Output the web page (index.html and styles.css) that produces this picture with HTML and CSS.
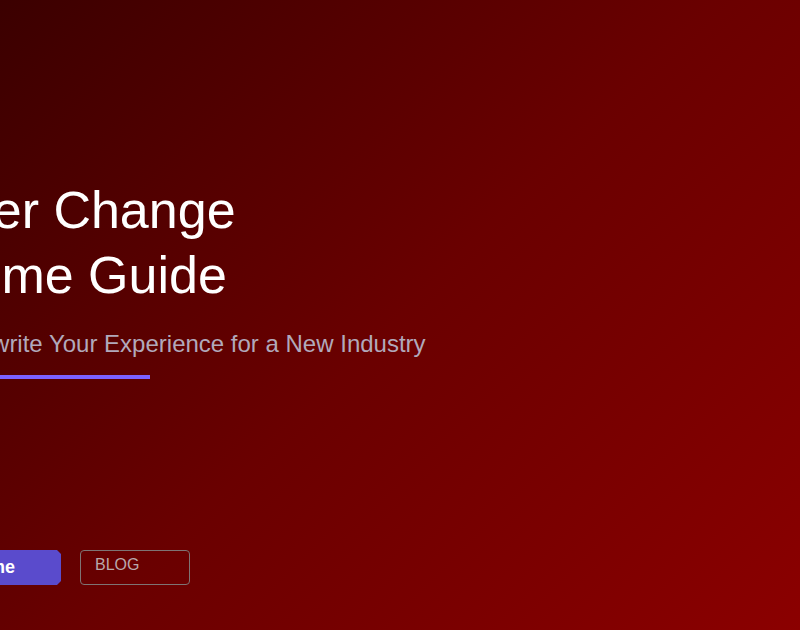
FILE: index.html
```html
<!DOCTYPE html>
<html lang="en">
<head>
<meta charset="utf-8">
<title>Career Change Resume Guide</title>
<link rel="stylesheet" href="styles.css">
</head>
<body>
  <section class="hero">
    <div class="hero-content">
      <h1 class="hero-title">Career Change<br>Resume Guide</h1>
      <p class="hero-subtitle">How to Rewrite Your Experience for a New Industry</p>
      <div class="hero-bar"></div>
      <div class="hero-actions">
        <a class="btn btn-primary" href="#">Build Resume</a>
        <a class="btn btn-outline" href="#">BLOG</a>
      </div>
    </div>
  </section>
</body>
</html>
```

FILE: styles.css
```css
html, body {
  margin: 0;
  padding: 0;
}

body {
  font-family: "Liberation Sans", Arial, Helvetica, sans-serif;
  overflow: hidden;
}

.hero {
  width: 100%;
  height: 630px;
  background: linear-gradient(135deg, #3b0000 0%, #6a0000 50%, #8b0000 100%);
  overflow: hidden;
}

.hero-content {
  margin-left: -120px;
  padding-top: 178px;
  display: flex;
  flex-direction: column;
  align-items: flex-start;
}

.hero-title {
  margin: 0;
  font-size: 52px;
  line-height: 65px;
  font-weight: 400;
  color: #ffffff;
  white-space: nowrap;
}

.hero-subtitle {
  margin: 19px 0 0;
  font-size: 24px;
  line-height: 33.6px;
  color: #b1a9bb;
  white-space: nowrap;
}

.hero-bar {
  margin-top: 14.4px;
  width: 270px;
  height: 4px;
  background: #7b61ff;
}

.hero-actions {
  margin-top: 171px;
  display: flex;
  gap: 19px;
}

.btn {
  box-sizing: border-box;
  height: 35px;
  text-decoration: none;
  font-size: 16px;
}

.btn-primary {
  width: 181px;
  padding: 0 46px 0 0;
  display: flex;
  align-items: center;
  justify-content: flex-end;
  background: #5a4bcc;
  color: #ffffff;
  font-size: 18px;
  font-weight: 700;
  clip-path: polygon(0 0, calc(100% - 4px) 0, 100% 4px, 100% calc(100% - 4px), calc(100% - 4px) 100%, 0 100%);
}

.btn-outline {
  width: 110px;
  padding: 5px 14px 0;
  border: 1px solid #7e7474;
  border-radius: 4px;
  color: #b9a9ab;
  line-height: 18px;
}
```
